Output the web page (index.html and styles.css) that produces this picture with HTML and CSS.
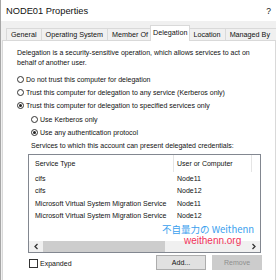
FILE: index.html
```html
<!DOCTYPE html>
<html>
<head>
    <title>NODE01 Properties</title>
    <link rel="stylesheet" href="styles.css">
</head>
<body>
    <div class="window">
        <div class="titlebar">
            <span>NODE01 Properties</span>
            <span class="help">?</span>
        </div>

        <div class="tabs">
            <div class="tab">General</div>
            <div class="tab">Operating System</div>
            <div class="tab">Member Of</div>
            <div class="tab active">Delegation</div>
            <div class="tab">Location</div>
            <div class="tab">Managed By</div>
        </div>

        <div class="page">
            <p class="intro">Delegation is a security-sensitive operation, which allows services to act on behalf of another user.</p>

            <div class="radio-group">
                <label class="radio"><span class="dot"></span>Do not trust this computer for delegation</label>
                <label class="radio"><span class="dot"></span>Trust this computer for delegation to any service (Kerberos only)</label>
                <label class="radio"><span class="dot on"></span>Trust this computer for delegation to specified services only</label>
                <div class="sub">
                    <label class="radio"><span class="dot"></span>Use Kerberos only</label>
                    <label class="radio"><span class="dot on"></span>Use any authentication protocol</label>
                </div>
            </div>

            <div class="services">
                <div class="caption">Services to which this account can present delegated credentials:</div>
                <div class="listbox">
                    <div class="list-head">
                        <div class="col-type">Service Type</div>
                        <div class="col-user">User or Computer</div>
                    </div>
                    <div class="rows">
                        <div class="row"><span class="col-type">cifs</span><span class="col-user">Node11</span></div>
                        <div class="row"><span class="col-type">cifs</span><span class="col-user">Node12</span></div>
                        <div class="row"><span class="col-type">Microsoft Virtual System Migration Service</span><span class="col-user">Node11</span></div>
                        <div class="row"><span class="col-type">Microsoft Virtual System Migration Service</span><span class="col-user">Node12</span></div>
                    </div>
                    <div class="hscroll">
                        <svg class="arrow" width="9" height="11" viewBox="0 0 9 11"><path d="M5.5 3 L3 5.5 L5.5 8" fill="none" stroke="#333" stroke-width="1.3"/></svg>
                        <div class="track"><div class="thumb"></div></div>
                        <svg class="arrow" width="9" height="11" viewBox="0 0 9 11"><path d="M3.5 3 L6 5.5 L3.5 8" fill="none" stroke="#333" stroke-width="1.3"/></svg>
                    </div>
                    <div class="watermark">
                        <div class="wm-blue">不自量力の Weithenn</div>
                        <div class="wm-red">weithenn.org</div>
                    </div>
                </div>

                <div class="footer">
                    <label class="check"><span class="box"></span>Expanded</label>
                    <div class="buttons">
                        <button class="btn">Add...</button>
                        <button class="btn" disabled>Remove</button>
                    </div>
                </div>
            </div>
        </div>
    </div>
</body>
</html>
```

FILE: styles.css
```css
body {
    margin: 0;
    font-family: "Liberation Sans", Arial, sans-serif;
    font-size: 7px;
    color: #111;
    background: #fff;
}
.window {
    width: 276px;
    height: 280px;
    overflow: hidden;
    background: #f0f0f0;
    border-left: 1px solid #a6a6a6;
    box-sizing: border-box;
}
.titlebar {
    height: 21px;
    background: #fff;
    display: flex;
    align-items: center;
    justify-content: space-between;
    padding: 0 5px 0 5px;
    font-size: 9.3px;
    color: #111;
}
.help {
    font-size: 8.5px;
}
.tabs {
    display: flex;
    align-items: flex-end;
    height: 19px;
    padding-left: 5px;
    font-size: 7.2px;
}
.tab {
    height: 11px;
    line-height: 11px;
    padding: 0 4px;
    border: 1px solid #d9d9d9;
    border-bottom: none;
    border-right: none;
    white-space: nowrap;
}
.tab.active {
    height: 14px;
    line-height: 13px;
    background: #fff;
    border-right: 1px solid #d9d9d9;
    margin: 0 -2px -1px -2px;
    padding: 0 2px 1px;
    position: relative;
}
.tab.active + .tab {
    border-left: none;
    padding-left: 5px;
}
.tab:last-child {
    border-right: 1px solid #d9d9d9;
    padding-right: 6px;
}
.page {
    background: #fff;
    border: 1px solid #d9d9d9;
    margin-left: 1px;
    height: 240px;
    padding: 7px 0 0 14px;
}
.intro {
    margin: 0 14px 0 0;
    line-height: 9.5px;
}
.radio-group {
    margin-top: 6px;
}
.radio {
    display: flex;
    align-items: center;
    height: 13px;
    white-space: nowrap;
}
.dot {
    width: 5px;
    height: 5px;
    border: 1px solid #333;
    border-radius: 50%;
    margin-right: 2px;
    display: inline-flex;
    align-items: center;
    justify-content: center;
    flex-shrink: 0;
}
.dot.on::after {
    content: "";
    width: 3px;
    height: 3px;
    border-radius: 50%;
    background: #222;
}
.sub {
    padding: 1px 0 0 14px;
}
.services {
    padding-left: 11px;
    margin-top: 2px;
}
.caption {
    line-height: 10px;
    padding-left: 3px;
}
.listbox {
    width: 231px;
    height: 97px;
    border: 1px solid #828790;
    margin-top: 3px;
    position: relative;
    display: flex;
    flex-direction: column;
}
.list-head {
    display: flex;
    height: 17px;
    line-height: 17px;
}
.list-head .col-type {
    width: 138px;
    padding-left: 6px;
    border-right: 1px solid #e5e5e5;
}
.list-head .col-user {
    width: 74px;
    padding-left: 3px;
    border-right: 1px solid #e5e5e5;
}
.rows {
    flex: 1;
    padding-top: 1px;
}
.row {
    display: flex;
    height: 12.3px;
    line-height: 12.3px;
}
.row .col-type {
    width: 139px;
    padding-left: 6px;
    white-space: nowrap;
    overflow: hidden;
}
.row .col-user {
    padding-left: 3px;
}
.hscroll {
    display: flex;
    align-items: center;
    height: 11px;
    background: #f0f0f0;
}
.arrow {
    flex-shrink: 0;
    margin: 0 2px 0 3px;
}
.track {
    flex: 1;
    height: 11px;
}
.thumb {
    width: 122px;
    height: 11px;
    background: #cdcdcd;
}
.watermark {
    position: absolute;
    left: 133px;
    top: 69px;
    white-space: nowrap;
}
.wm-blue {
    color: #3aa0ee;
    font-size: 9.5px;
    font-family: "Noto Sans CJK JP", "Liberation Sans", sans-serif;
    line-height: 11px;
}
.wm-red {
    color: #f0335a;
    font-size: 10px;
    line-height: 11px;
    margin-left: 22px;
}
.footer {
    display: flex;
    align-items: flex-start;
    justify-content: space-between;
    width: 233px;
    padding-left: 1px;
}
.check {
    display: flex;
    align-items: center;
    margin-top: 6px;
}
.box {
    width: 7px;
    height: 7px;
    border: 1px solid #333;
    margin-right: 2px;
}
.buttons {
    display: flex;
    gap: 6px;
    margin-top: 2px;
}
.btn {
    width: 50px;
    height: 15px;
    font: inherit;
    background: #e1e1e1;
    border: 1px solid #adadad;
    color: #111;
    padding: 0;
}
.btn:disabled {
    background: #cccccc;
    border-color: #cccccc;
    color: #8f8f8f;
}
```
